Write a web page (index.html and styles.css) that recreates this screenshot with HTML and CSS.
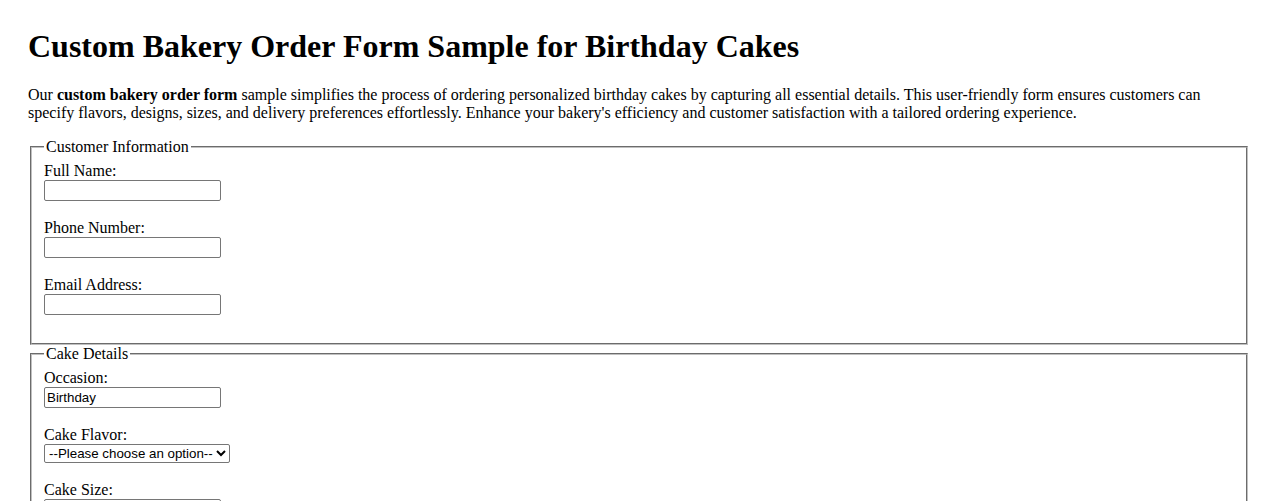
FILE: index.html
```html
<!DOCTYPE html>
<html lang="en">
<head>
<meta charset="utf-8">
<title>Custom Bakery Order Form Sample for Birthday Cakes</title>
<link rel="stylesheet" href="styles.css">
</head>
<body>
<div class="page">
  <h1 class="title">Custom Bakery Order Form Sample for Birthday Cakes</h1>
  <p class="intro">Our <strong>custom bakery order form</strong> sample simplifies the process of ordering personalized birthday cakes by capturing all essential details. This user-friendly form ensures customers can specify flavors, designs, sizes, and delivery preferences effortlessly. Enhance your bakery's efficiency and customer satisfaction with a tailored ordering experience.</p>
  <form class="order-form">
    <fieldset class="group">
      <legend class="group-title">Customer Information</legend>
      <div class="field">
        <label class="field-label" for="fullname">Full Name:</label>
        <input class="text-input" type="text" id="fullname" name="fullname">
      </div>
      <div class="field">
        <label class="field-label" for="phone">Phone Number:</label>
        <input class="text-input" type="tel" id="phone" name="phone">
      </div>
      <div class="field">
        <label class="field-label" for="email">Email Address:</label>
        <input class="text-input" type="email" id="email" name="email">
      </div>
    </fieldset>
    <fieldset class="group">
      <legend class="group-title">Cake Details</legend>
      <div class="field">
        <label class="field-label" for="occasion">Occasion:</label>
        <input class="text-input" type="text" id="occasion" name="occasion" value="Birthday">
      </div>
      <div class="field">
        <label class="field-label" for="flavor">Cake Flavor:</label>
        <select class="select-input" id="flavor" name="flavor">
          <option>--Please choose an option--</option>
          <option>Chocolate</option>
          <option>Vanilla</option>
          <option>Red Velvet</option>
        </select>
      </div>
      <div class="field">
        <label class="field-label" for="size">Cake Size:</label>
        <input class="text-input" type="text" id="size" name="size">
      </div>
      <div class="field">
        <label class="field-label" for="message">Message on Cake:</label>
        <input class="text-input" type="text" id="message" name="message">
      </div>
    </fieldset>
  </form>
</div>
</body>
</html>
```
FILE: styles.css
```css
html, body {
  margin: 0;
  padding: 0;
  background: #ffffff;
}

body {
  font-family: "Liberation Serif", "Times New Roman", serif;
  font-size: 16px;
  color: #000000;
}

.page {
  padding: 28px;
}

.title {
  font-size: 32px;
  font-weight: bold;
  margin: 0 0 21.44px 0;
  line-height: normal;
}

.intro {
  margin: 0 0 16px 0;
  line-height: normal;
}

.order-form {
  margin: 0;
}

.group {
  margin: 0 2px;
  padding: 5.6px 12px 10px 12px;
  border: 2px groove #c0c0c0;
}

.group-title {
  padding: 0 2px;
  line-height: normal;
}

.field {
  margin-bottom: 17.6px;
}

.field-label {
  display: block;
  line-height: 18.4px;
}

.text-input {
  display: block;
  box-sizing: border-box;
  width: 177px;
  height: 21px;
  margin: 0;
  padding: 1px 2px;
  font-family: "Liberation Sans", Arial, sans-serif;
  font-size: 13.33px;
  border: 1px solid #767676;
  border-radius: 2px;
  background: #ffffff;
  color: #000000;
}

.select-input {
  display: block;
  box-sizing: border-box;
  height: 19px;
  margin: 0;
  font-family: "Liberation Sans", Arial, sans-serif;
  font-size: 13.33px;
  border: 1px solid #767676;
  border-radius: 2px;
  background: #ffffff;
  color: #000000;
}
```
